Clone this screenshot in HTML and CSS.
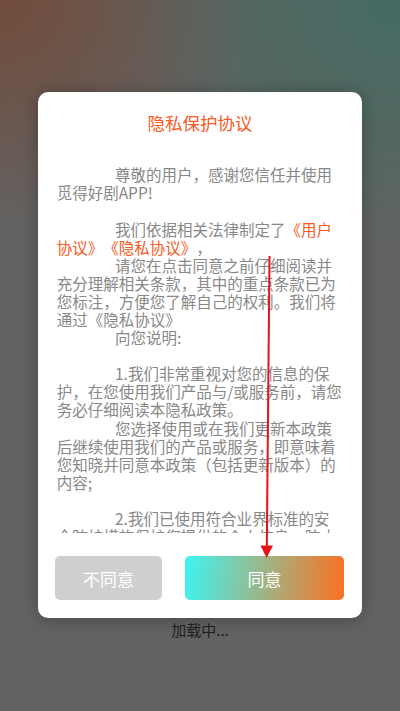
FILE: index.html
```html
<!DOCTYPE html>
<html lang="zh-CN">
<head>
<meta charset="utf-8">
<title>隐私保护协议</title>
<link rel="stylesheet" href="styles.css">
</head>
<body>
<div class="screen">
  <div class="dialog">
    <div class="title">隐私保护协议</div>
    <div class="content">
      <p class="para gap">尊敬的用户，感谢您信任并使用觅得好剧APP!</p>
      <p class="para">我们依据相关法律制定了<span class="link">《用户协议》</span><span class="link">《隐私协议》</span>，</p>
      <p class="para">请您在点击同意之前仔细阅读并充分理解相关条款，其中的重点条款已为您标注，方便您了解自己的权利。我们将通过《隐私协议》</p>
      <p class="para gap">向您说明:</p>
      <p class="para">1.我们非常重视对您的信息的保护，在您使用我们产品与/或服务前，请您务必仔细阅读本隐私政策。</p>
      <p class="para gap">您选择使用或在我们更新本政策后继续使用我们的产品或服务，即意味着您知晓并同意本政策（包括更新版本）的内容;</p>
      <p class="para">2.我们已使用符合业界标准的安全防护措施保护您提供的个人信息，防止数据遭到未经授权的访问、公开披露、使用、修改、损坏或丢失。</p>
    </div>
    <div class="actions">
      <div class="btn btn-refuse">不同意</div>
      <div class="btn btn-agree">同意</div>
    </div>
  </div>
  <div class="loading">加载中...</div>
</div>
<svg class="arrow" width="400" height="711" viewBox="0 0 400 711">
  <line x1="269.5" y1="256" x2="266.8" y2="548" stroke="#e8121c" stroke-width="2"/>
  <polygon points="260.5,545.5 273,545.5 266.6,558" fill="#e8121c"/>
</svg>
</body>
</html>
```

FILE: styles.css
```css
html, body {
  margin: 0;
  padding: 0;
}
body {
  width: 400px;
  height: 711px;
  overflow: hidden;
  position: relative;
  font-family: "Noto Sans CJK SC", "Noto Sans", sans-serif;
  text-spacing-trim: space-all;
  background:
    radial-gradient(ellipse 240px 230px at 0 0, rgba(114, 74, 56, 0.95), rgba(114, 74, 56, 0) 100%),
    radial-gradient(ellipse 300px 260px at 100% 0, rgba(66, 108, 98, 0.95), rgba(66, 108, 98, 0) 100%),
    #636363;
}
.screen {
  display: flex;
  flex-direction: column;
  align-items: center;
  padding-top: 92px;
}
.dialog {
  width: 324px;
  height: 526px;
  box-sizing: border-box;
  background: #ffffff;
  border-radius: 10px;
  box-shadow: 0 2px 18px rgba(0, 0, 0, 0.28);
  display: flex;
  flex-direction: column;
  padding-top: 18.5px;
  padding-bottom: 18px;
}
.title {
  text-align: center;
  font-size: 17.5px;
  line-height: 24px;
  height: 24px;
  color: #f95a24;
}
.content {
  margin-top: 30.75px;
  height: 367.75px;
  overflow: hidden;
  padding: 0 18.3px 0 18.7px;
  font-size: 15.5px;
  line-height: 18.1px;
  color: #888888;
}
.para {
  margin: 0;
  text-indent: 58.3px;
}
.para.gap {
  margin-bottom: 18.1px;
}
.link {
  color: #f95a24;
}
.actions {
  margin-top: 23px;
  height: 44px;
  display: flex;
  gap: 23px;
  padding: 0 18px 0 17px;
}
.btn {
  height: 44px;
  border-radius: 5px;
  display: flex;
  align-items: center;
  justify-content: center;
  font-size: 17px;
  color: #ffffff;
}
.btn-refuse {
  width: 107px;
  background: #cfcfcf;
}
.btn-agree {
  width: 159px;
  background: linear-gradient(95deg, #3ff4f1 0%, #9fb487 50%, #fb7122 100%);
}
.loading {
  margin-top: 2px;
  font-size: 15px;
  line-height: 20px;
  color: #1e1e1e;
}
.arrow {
  position: absolute;
  left: 0;
  top: 0;
  pointer-events: none;
}
```
